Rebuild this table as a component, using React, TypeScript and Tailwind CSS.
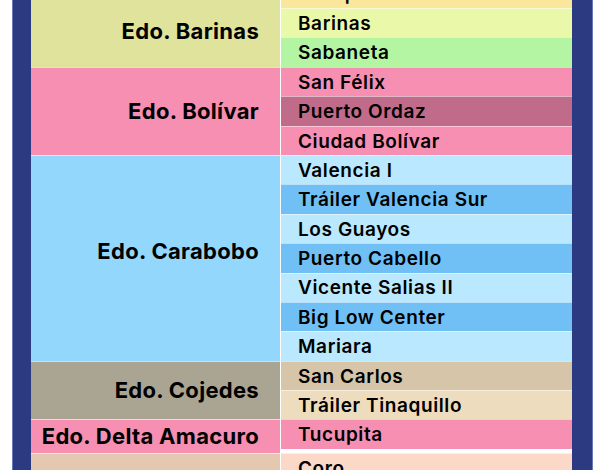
import React from 'react';

type Row = { name: string; bg: string };
type Group = { state: string; bg: string; pad?: string; rows: Row[] };

const groups: Group[] = [
  {
    state: 'Edo. Barinas',
    bg: 'bg-[#dfe39c]',
    pad: 'pt-[17px]',
    rows: [
      { name: 'Josepo', bg: 'bg-[#fbe79c]' },
      { name: 'Barinas', bg: 'bg-[#eaf8a9]' },
      { name: 'Sabaneta', bg: 'bg-[#b3f5a2]' },
    ],
  },
  {
    state: 'Edo. Bolívar',
    bg: 'bg-[#f68fb2]',
    rows: [
      { name: 'San Félix', bg: 'bg-[#f68fb2]' },
      { name: 'Puerto Ordaz', bg: 'bg-[#c16b8b]' },
      { name: 'Ciudad Bolívar', bg: 'bg-[#f68fb2]' },
    ],
  },
  {
    state: 'Edo. Carabobo',
    bg: 'bg-[#94d7fd]',
    pad: 'pb-[14px]',
    rows: [
      { name: 'Valencia I', bg: 'bg-[#bae8fe]' },
      { name: 'Tráiler Valencia Sur', bg: 'bg-[#70c0f6]' },
      { name: 'Los Guayos', bg: 'bg-[#bae8fe]' },
      { name: 'Puerto Cabello', bg: 'bg-[#70c0f6]' },
      { name: 'Vicente Salias II', bg: 'bg-[#bae8fe]' },
      { name: 'Big Low Center', bg: 'bg-[#70c0f6]' },
      { name: 'Mariara', bg: 'bg-[#bae8fe]' },
    ],
  },
  {
    state: 'Edo. Cojedes',
    bg: 'bg-[#aaa593]',
    rows: [
      { name: 'San Carlos', bg: 'bg-[#d6c5a8]' },
      { name: 'Tráiler Tinaquillo', bg: 'bg-[#eedcbe]' },
    ],
  },
  {
    state: 'Edo. Delta Amacuro',
    bg: 'bg-[#f68fb2]',
    rows: [{ name: 'Tucupita', bg: 'bg-[#f68fb2]' }],
  },
  {
    state: 'Edo. Falcón',
    bg: 'bg-[#e4c8af]',
    rows: [
      { name: 'Coro', bg: 'bg-[#fbd8c8]' },
      { name: 'Punto Fijo', bg: 'bg-[#fbd8c8]' },
    ],
  },
];

export default function App() {
  return (
    <div className="h-[470px] w-[607px] overflow-hidden bg-white font-['Inter','Liberation_Sans',sans-serif] text-black">
      <div className="flex h-full pl-[12px] pr-[14px]">
        <div className="w-[19px] shrink-0 border-l border-[#6b78b8] bg-[#2c3a82]" />
        <div className="-mt-[21.4px] flex w-[541px] flex-col">
          {groups.map((g, gi) => (
            <div key={g.state} className="flex">
              <div
                className={`flex w-[249px] shrink-0 items-center justify-end pr-[21px] text-[22px] font-bold tracking-[0.3px] ${g.bg} ${g.pad ?? ''} ${
                  gi > 0 ? 'border-t border-white/60' : ''
                }`}
              >
                {g.state}
              </div>
              <div className="w-px shrink-0 bg-white/70" />
              <div className="flex flex-1 flex-col">
                {g.rows.map((r, i) => (
                  <div
                    key={r.name}
                    className={`flex h-[29.4px] items-center pl-[17px] pt-[2px] text-[19px] font-semibold tracking-[0.6px] ${r.bg} ${
                      gi > 0 || i > 0 ? 'border-t border-white/50' : ''
                    }`}
                  >
                    {r.name}
                  </div>
                ))}
              </div>
            </div>
          ))}
        </div>
        <div className="w-[21px] shrink-0 border-r border-[#6b78b8] bg-[#2c3a82]" />
      </div>
    </div>
  );
}
